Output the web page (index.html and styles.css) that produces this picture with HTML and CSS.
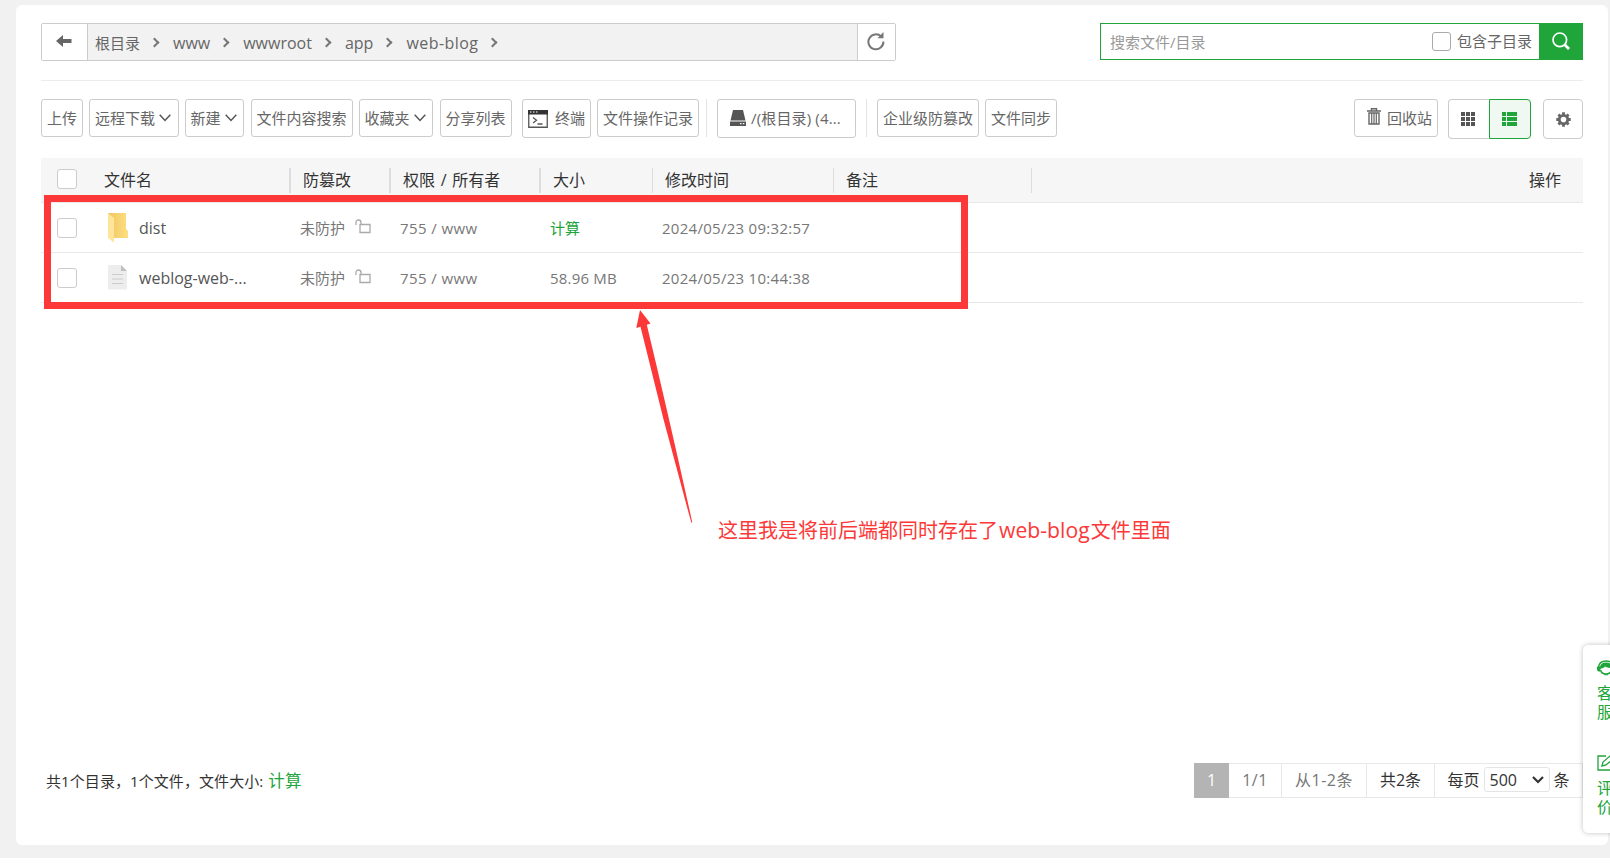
FILE: index.html
```html
<!DOCTYPE html>
<html lang="zh-CN">

<head>
    <meta charset="UTF-8">
    <meta name="viewport" content="width=device-width, initial-scale=1.0">
    <title>文件</title>
    <link rel="stylesheet" href="styles.css">
</head>

<body>
    <div class="page">
        <div class="card">
            <!-- path + search -->
            <div class="topbar">
                <div class="path">
                    <button class="back">
                        <svg width="16" height="12" viewBox="0 0 16 12"><path d="M0 6L7 0v4h8.500v4H7v4z" fill="#666"/></svg>
                    </button>
                    <div class="crumbs">
                        <span class="cn">根目录</span><i></i>
                        <span>www</span><i></i>
                        <span>wwwroot</span><i></i>
                        <span>app</span><i></i>
                        <span class="here">web-blog</span><i></i>
                    </div>
                    <button class="refresh">
                        <svg width="18" height="19" viewBox="0 0 18 19"><path d="M14.200 4.500A7.500 7.500 0 1 0 16.400 9.500" fill="none" stroke="#777" stroke-width="2"/><path d="M16.500 0v6.200h-6z" fill="#777"/></svg>
                    </button>
                </div>
                <div class="search">
                    <div class="placeholder">搜索文件/目录</div>
                    <span class="box"></span>
                    <span class="sub">包含子目录</span>
                    <button class="search-btn">
                        <svg width="18" height="18" viewBox="0 0 18 18" fill="none" stroke="#fff"><circle cx="7.800" cy="7.800" r="6.800" stroke-width="1.700"/><path d="M12.500 12.500L17 17" stroke-width="2.800"/></svg>
                    </button>
                </div>
            </div>

            <!-- toolbar -->
            <div class="toolbar">
                <button class="btn upload">上传</button>
                <button class="btn download">远程下载<svg class="down" viewBox="0 0 12 8"><path d="M.7.8L6 6.500 11.300.8"/></svg></button>
                <button class="btn create">新建<svg class="down" viewBox="0 0 12 8"><path d="M.7.8L6 6.500 11.300.8"/></svg></button>
                <button class="btn content">文件内容搜索</button>
                <button class="btn fav">收藏夹<svg class="down" viewBox="0 0 12 8"><path d="M.7.8L6 6.500 11.300.8"/></svg></button>
                <button class="btn share">分享列表</button>
                <button class="btn term">
                    <svg width="20" height="18" viewBox="0 0 20 18"><path d="M.75.75h18.500v16.500H.75z" fill="#fff" stroke="#555" stroke-width="1.300"/><path d="M0 0h20v4.500H0z" fill="#333"/><path d="M2 2h1.500M5 2h1.500M8 2h1.500" stroke="#fff" stroke-width="1.200"/><path d="M5 7.500l3.500 2.800L5 13M9.500 14h5" fill="none" stroke="#555" stroke-width="1.300"/></svg>
                    <span>终端</span>
                </button>
                <button class="btn log">文件操作记录</button>
                <span class="sep"></span>
                <button class="btn disk">
                    <svg width="16" height="16" viewBox="0 0 16 16" fill="#555"><path d="M3 0h10l2.500 10.500H.5z"/><path d="M0 11.500h16V16H0z"/><path d="M10 13.700h1.500M12.800 13.700h1.500" stroke="#fff" stroke-width="1.300"/></svg>
                    <span>/(根目录) (4...</span>
                </button>
                <span class="sep"></span>
                <button class="btn tamper">企业级防篡改</button>
                <button class="btn sync">文件同步</button>

                <div class="tools">
                    <button class="btn recycle">
                        <svg width="14" height="17" viewBox="0 0 14 17" fill="none" stroke="#666"><path d="M0 3h14M4.500 2.500V.8h5v1.700" stroke-width="1.400"/><path d="M2 5v11h10V5z" stroke-width="1.400"/><path d="M4.700 5v11M7 5v11M9.300 5v11" stroke-width="1.200"/></svg>
                        <span>回收站</span>
                    </button>
                    <div class="views">
                        <button class="view">
                            <svg width="14" height="14" viewBox="0 0 14 14" fill="#555"><path d="M0 0h4v4H0zM5 0h4v4H5zM10 0h4v4h-4zM0 5h4v4H0zM5 5h4v4H5zM10 5h4v4h-4zM0 10h4v4H0zM5 10h4v4H5zM10 10h4v4h-4z"/></svg>
                        </button>
                        <button class="view active">
                            <svg width="15" height="14" viewBox="0 0 15 14" fill="#20a53a"><path d="M0 0h4v4H0zM5 0h10v4H5zM0 5h4v4H0zM5 5h10v4H5zM0 10h4v4H0zM5 10h10v4H5z"/></svg>
                        </button>
                    </div>
                    <button class="gear">
                        <svg width="15" height="15" viewBox="-8 -8 16 16"><circle r="4.500" fill="none" stroke="#666" stroke-width="3"/><path d="M0-7.700V-5M0 7.700V5M-7.700 0H-5M7.700 0H5M-5.400-5.400l1.600 1.600M5.400 5.400L3.800 3.800M-5.400 5.400l1.600-1.600M5.400-5.400L3.800-3.800" stroke="#666" stroke-width="3"/></svg>
                    </button>
                </div>
            </div>

            <!-- file list -->
            <div class="files">
                <div class="row head">
                    <div class="check"><span class="box"></span></div>
                    <div class="name wide">文件名</div>
                    <div class="wide">防篡改</div>
                    <div class="wide owner">权限 / 所有者</div>
                    <div>大小</div>
                    <div>修改时间</div>
                    <div>备注</div>
                    <div class="action">操作</div>
                </div>
                <div class="row">
                    <div class="check"><span class="box"></span></div>
                    <div class="name">
                        <svg width="20" height="30" viewBox="0 0 20 30">
                            <defs><linearGradient id="fold"><stop offset="0" stop-color="#edc55e"/><stop offset="1" stop-color="#ffdf82"/></linearGradient></defs>
                            <path d="M0 0h18v16l2 2v7H4z" fill="url(#fold)"/><path d="M0 0l6 5v24.500L0 25z" fill="#ffe59c"/>
                        </svg>
                        <span>dist</span>
                    </div>
                    <div class="guard">未防护<svg width="16" height="15" viewBox="0 0 16 15"><path d="M5 5.500h10v8H5zM1 6V3.500Q1 1 3.500 1T6 3.500v2" fill="none" stroke="#aaa" stroke-width="1.300"/></svg></div>
                    <div class="perm">755 / www</div>
                    <div class="green">计算</div>
                    <div class="time">2024/05/23 09:32:57</div>
                    <div></div>
                    <div></div>
                </div>
                <div class="row">
                    <div class="check"><span class="box"></span></div>
                    <div class="name">
                        <svg width="20" height="30" viewBox="0 0 20 30">
                            <path d="M1 2h12l6 6v17.500q0 1-1 1H1q-1 0-1-1V3q0-1 1-1z" fill="#ededed"/><path d="M13 2l6 6h-6z" fill="#bfbfbf"/><path d="M4 11.500h11M4 16h11M4 20.500h11" stroke="#ccc"/>
                        </svg>
                        <span>weblog-web-...</span>
                    </div>
                    <div class="guard">未防护<svg width="16" height="15" viewBox="0 0 16 15"><path d="M5 5.500h10v8H5zM1 6V3.500Q1 1 3.500 1T6 3.500v2" fill="none" stroke="#aaa" stroke-width="1.300"/></svg></div>
                    <div class="perm">755 / www</div>
                    <div class="size">58.96 MB</div>
                    <div class="time">2024/05/23 10:44:38</div>
                    <div></div>
                    <div></div>
                </div>
            </div>

            <div class="footer">
                <div class="total">共1个目录，1个文件，文件大小: <a>计算</a></div>
                <div class="pages">
                    <span class="current">1</span>
                    <span class="p-num">1/1</span>
                    <span class="p-range">从1-2条</span>
                    <span class="p-total">共2条</span>
                    <span class="p-size">每页<span class="select">500<svg width="12" height="8" viewBox="0 0 12 8"><path d="M1 1l5 5 5-5" fill="none" stroke="#333" stroke-width="2.200"/></svg></span>条</span>
                </div>
            </div>
        </div>
    </div>

    <!-- floating service panel -->
    <div class="service">
        <div class="service-item">
            <svg width="18" height="16" viewBox="0 0 18 16"><path d="M1.500 7.500Q2 1 9 1t7.500 6.500" fill="none" stroke="#20a53a" stroke-width="1.500"/><path d="M3 10Q2 2.500 9 2.500T15 10q-1.500-.5-2-2.500-3 .5-5-1-1.500 2-4 2zM0 6.500h3v5H1.500Q0 11 0 9zM15 6.500h3V9q0 2-1.500 2.500H15z" fill="#20a53a"/><path d="M3.500 10q1 4 5.500 4t5.500-4M7 14.500h4" fill="none" stroke="#20a53a" stroke-width="1.500"/></svg>
            <span>客服</span>
        </div>
        <div class="service-item">
            <svg width="18" height="16" viewBox="0 0 18 16" fill="none" stroke="#20a53a" stroke-width="1.300"><path d="M9 1H1v14h14V8M5 11l1-4 7-6 3 3-7 6z"/></svg>
            <span>评价</span>
        </div>
    </div>

    <!-- annotation -->
    <div class="mark"></div>
    <svg class="arrow" width="62" height="214" viewBox="0 0 62 214"><path d="M8 0L18.500 13.500l-3.700 1.200Q37 107 60.300 212.500h-1Q32 115 8.500 16.700L4.300 18z" fill="#fc3938"/></svg>
    <div class="note">这里我是将前后端都同时存在了<span>web-blog</span>文件里面</div>
</body>

</html>
```
FILE: styles.css
```css
* {
    box-sizing: border-box;
}

body {
    margin: 0;
    height: 864px;
    overflow: hidden;
    position: relative;
    background: #fff;
    font-family: "Open Sans", "Noto Sans CJK SC", sans-serif;
    font-size: 15px;
    line-height: 20px;
    color: #666;
}

button {
    margin: 0;
    padding: 0;
    border: none;
    background: #fff;
    font: inherit;
    color: inherit;
    cursor: pointer;
}

svg {
    display: block;
    flex: none;
}

.page {
    height: 858px;
    padding: 5px 2px 13px 16px;
    background: #f1f1f1;
}

.card {
    height: 840px;
    padding: 18px 25px 0;
    border-radius: 6px;
    background: #fff;
    display: flex;
    flex-direction: column;
}

/* Path and search */
.topbar {
    height: 58px;
    display: flex;
    justify-content: space-between;
    border-bottom: 1px solid #ececec;
}

.path {
    width: 855px;
    height: 38px;
    display: flex;
    border: 1px solid #ccc;
    border-radius: 2px;
    background: #f2f2f2;
}

.back,
.refresh {
    display: flex;
    align-items: center;
    justify-content: center;
}

.back {
    width: 46px;
    padding: 0 1px 2px 0;
    border-right: 1px solid #ccc;
}

.refresh {
    width: 38px;
    padding: 0 1px 1px 0;
    border-left: 1px solid #ccc;
}

.crumbs {
    flex: 1;
    display: flex;
    align-items: center;
    padding: 1px 0 0 7px;
    font-size: 16px;
}

.crumbs .cn {
    font-size: 15px;
}

.crumbs .here {
    letter-spacing: 0.45px;
}

.crumbs i {
    width: 7px;
    height: 7px;
    margin: 0 15px 1px 11px;
    border: solid #777;
    border-width: 2px 2px 0 0;
    transform: rotate(45deg);
}

.search {
    width: 483px;
    height: 37px;
    display: flex;
    align-items: center;
    border: 1px solid #20a53a;
}

.placeholder {
    flex: 1;
    padding-left: 9px;
    color: #999;
}

.box {
    display: block;
    width: 20px;
    height: 20px;
    border: 1px solid #ccc;
    border-radius: 3px;
    background: #fff;
}

.search .box {
    width: 19px;
    height: 19px;
    border-color: #aaa;
}

.sub {
    margin: 0 7px 1px 6px;
}

.search-btn {
    width: 44px;
    height: 37px;
    margin-right: -1px;
    display: flex;
    align-items: center;
    justify-content: center;
    padding: 0 1px 1px 0;
    background: #20a53a;
}

/* Toolbar */
.toolbar {
    height: 77px;
    padding-top: 18px;
    display: flex;
    align-items: flex-start;
}

.btn {
    height: 38px;
    display: flex;
    align-items: center;
    justify-content: center;
    border: 1px solid #ccc;
    border-radius: 3px;
    white-space: nowrap;
}

.down {
    width: 12px;
    height: 8px;
    margin: 0 2px 0 4px;
    fill: none;
    stroke: #555;
    stroke-width: 1.5;
}

.upload {
    width: 42px;
    margin-right: 6px;
}

.download {
    width: 90px;
    margin-right: 6px;
}

.create {
    width: 59px;
    margin-right: 7px;
}

.content {
    width: 102px;
    padding-right: 1px;
    margin-right: 6px;
}

.fav {
    width: 74px;
    margin-right: 7px;
}

.share {
    width: 72px;
    padding-right: 1px;
    margin-right: 10px;
}

.term {
    width: 69px;
    height: 39px;
    gap: 7px;
    margin-right: 6px;
}

.term span,
.disk span {
    margin-bottom: 2px;
}

.log {
    width: 102px;
}

.sep {
    width: 1px;
    height: 38px;
    margin: 0 10px 0 7px;
    background: #e4e4e4;
}

.disk {
    width: 139px;
    height: 39px;
    gap: 5px;
    padding-right: 2px;
    letter-spacing: 0.15px;
}

.disk svg {
    margin-bottom: 1px;
}

.sep + .disk + .sep {
    margin-left: 10px;
}

.tamper {
    width: 102px;
    margin-right: 6px;
}

.sync {
    width: 72px;
}

.tools {
    display: flex;
    margin-left: auto;
}

.recycle {
    width: 84px;
    gap: 6px;
    padding-left: 7px;
    margin-right: 10px;
}

.recycle svg {
    margin-bottom: 4px;
}

.views {
    display: flex;
    margin-right: 12px;
}

.view,
.gear {
    height: 40px;
    display: flex;
    align-items: center;
    justify-content: center;
    border: 1px solid #ccc;
}

.view {
    width: 41px;
    padding-right: 2px;
    border-right: none;
    border-radius: 4px 0 0 4px;
}

.view.active {
    width: 42px;
    padding-right: 1px;
    border: 1px solid #20a53a;
    border-radius: 0 4px 4px 0;
    background: #f0f9f1;
}

.gear {
    width: 40px;
    border-radius: 4px;
}

/* File list */
.row {
    height: 50px;
    display: grid;
    grid-template-columns: 50px 200px 100px 150px 112px 181px 198px 1fr;
    align-items: center;
    border-bottom: 1px solid #e8e8e8;
    color: #777;
}

.row > div {
    padding-left: 9px;
}

.row > .check {
    padding-left: 16px;
}

.row > .name {
    display: flex;
    align-items: center;
    gap: 11px;
    padding-left: 17px;
    font-size: 16px;
    color: #555;
}

.row .guard {
    display: flex;
    align-items: center;
    gap: 10px;
}

.guard svg {
    margin-bottom: 2px;
}

.row .green,
.total a {
    color: #20a53a;
}

.perm {
    letter-spacing: 0.4px;
}

.size {
    letter-spacing: 0.2px;
}

.time {
    letter-spacing: 0.28px;
}

.row.head {
    height: 45px;
    background: #f6f6f6;
    font-size: 16px;
    color: #333;
}

.head > div {
    height: 25px;
    line-height: 25px;
    padding-left: 12px;
    border-right: 1px solid #ddd;
}

.head > .wide {
    border-right: 2px solid #ddd;
}

.row.head > .name {
    padding-left: 13px;
    color: #333;
}

.head > .owner {
    word-spacing: 1.5px;
}

.head > .check,
.head > .action {
    border-right: none;
}

.head .box {
    margin-top: 1px;
}

.head > .action {
    padding-right: 22px;
    text-align: right;
}

/* Footer */
.footer {
    margin-top: auto;
    margin-bottom: 47px;
    height: 35px;
    display: flex;
    align-items: center;
    justify-content: space-between;
}

.total {
    padding: 1px 0 0 5px;
    letter-spacing: 0.08px;
    color: #333;
}

.total a {
    margin-left: 1px;
    font-size: 16.5px;
}

.pages {
    display: flex;
    font-size: 16px;
    color: #333;
}

.pages > span {
    height: 35px;
    padding-bottom: 2px;
    display: flex;
    align-items: center;
    justify-content: center;
    border: 1px solid #e8e8e8;
    border-left: none;
}

.pages .current {
    width: 35px;
    border: none;
    background: #b4b4b4;
    color: #fff;
}

.pages .p-num {
    width: 53px;
    letter-spacing: 0.5px;
    color: #777;
}

.pages .p-range {
    width: 85px;
    letter-spacing: 0.5px;
    color: #777;
}

.p-total {
    width: 68px;
}

.p-size {
    width: 148px;
}

.select {
    width: 66px;
    height: 25px;
    margin: 0 4px;
    padding: 0 5px;
    display: flex;
    align-items: center;
    justify-content: space-between;
    border: 1px solid #e4e4e4;
    border-radius: 3px;
}

/* Floating panel */
.service {
    position: absolute;
    top: 645px;
    left: 1583px;
    width: 46px;
    height: 188px;
    padding: 15px 0 0 14px;
    border-radius: 5px;
    background: #fff;
    box-shadow: 0 0 5px rgba(0, 0, 0, 0.25);
    font-size: 16px;
    line-height: 19px;
    color: #20a53a;
}

.service-item {
    height: 95px;
}

.service-item span {
    display: block;
    width: 16px;
    margin-top: 8px;
}

/* Annotation */
.mark {
    position: absolute;
    top: 195px;
    left: 44px;
    width: 924px;
    height: 114px;
    border: 7px solid #fc3938;
}

.arrow {
    position: absolute;
    top: 310px;
    left: 632px;
}

.note {
    position: absolute;
    top: 515px;
    left: 718px;
    font-size: 20px;
    line-height: 30px;
    white-space: nowrap;
    color: #fc3938;
}

.note span {
    margin: 0 1px;
    font-size: 21.2px;
}
```
